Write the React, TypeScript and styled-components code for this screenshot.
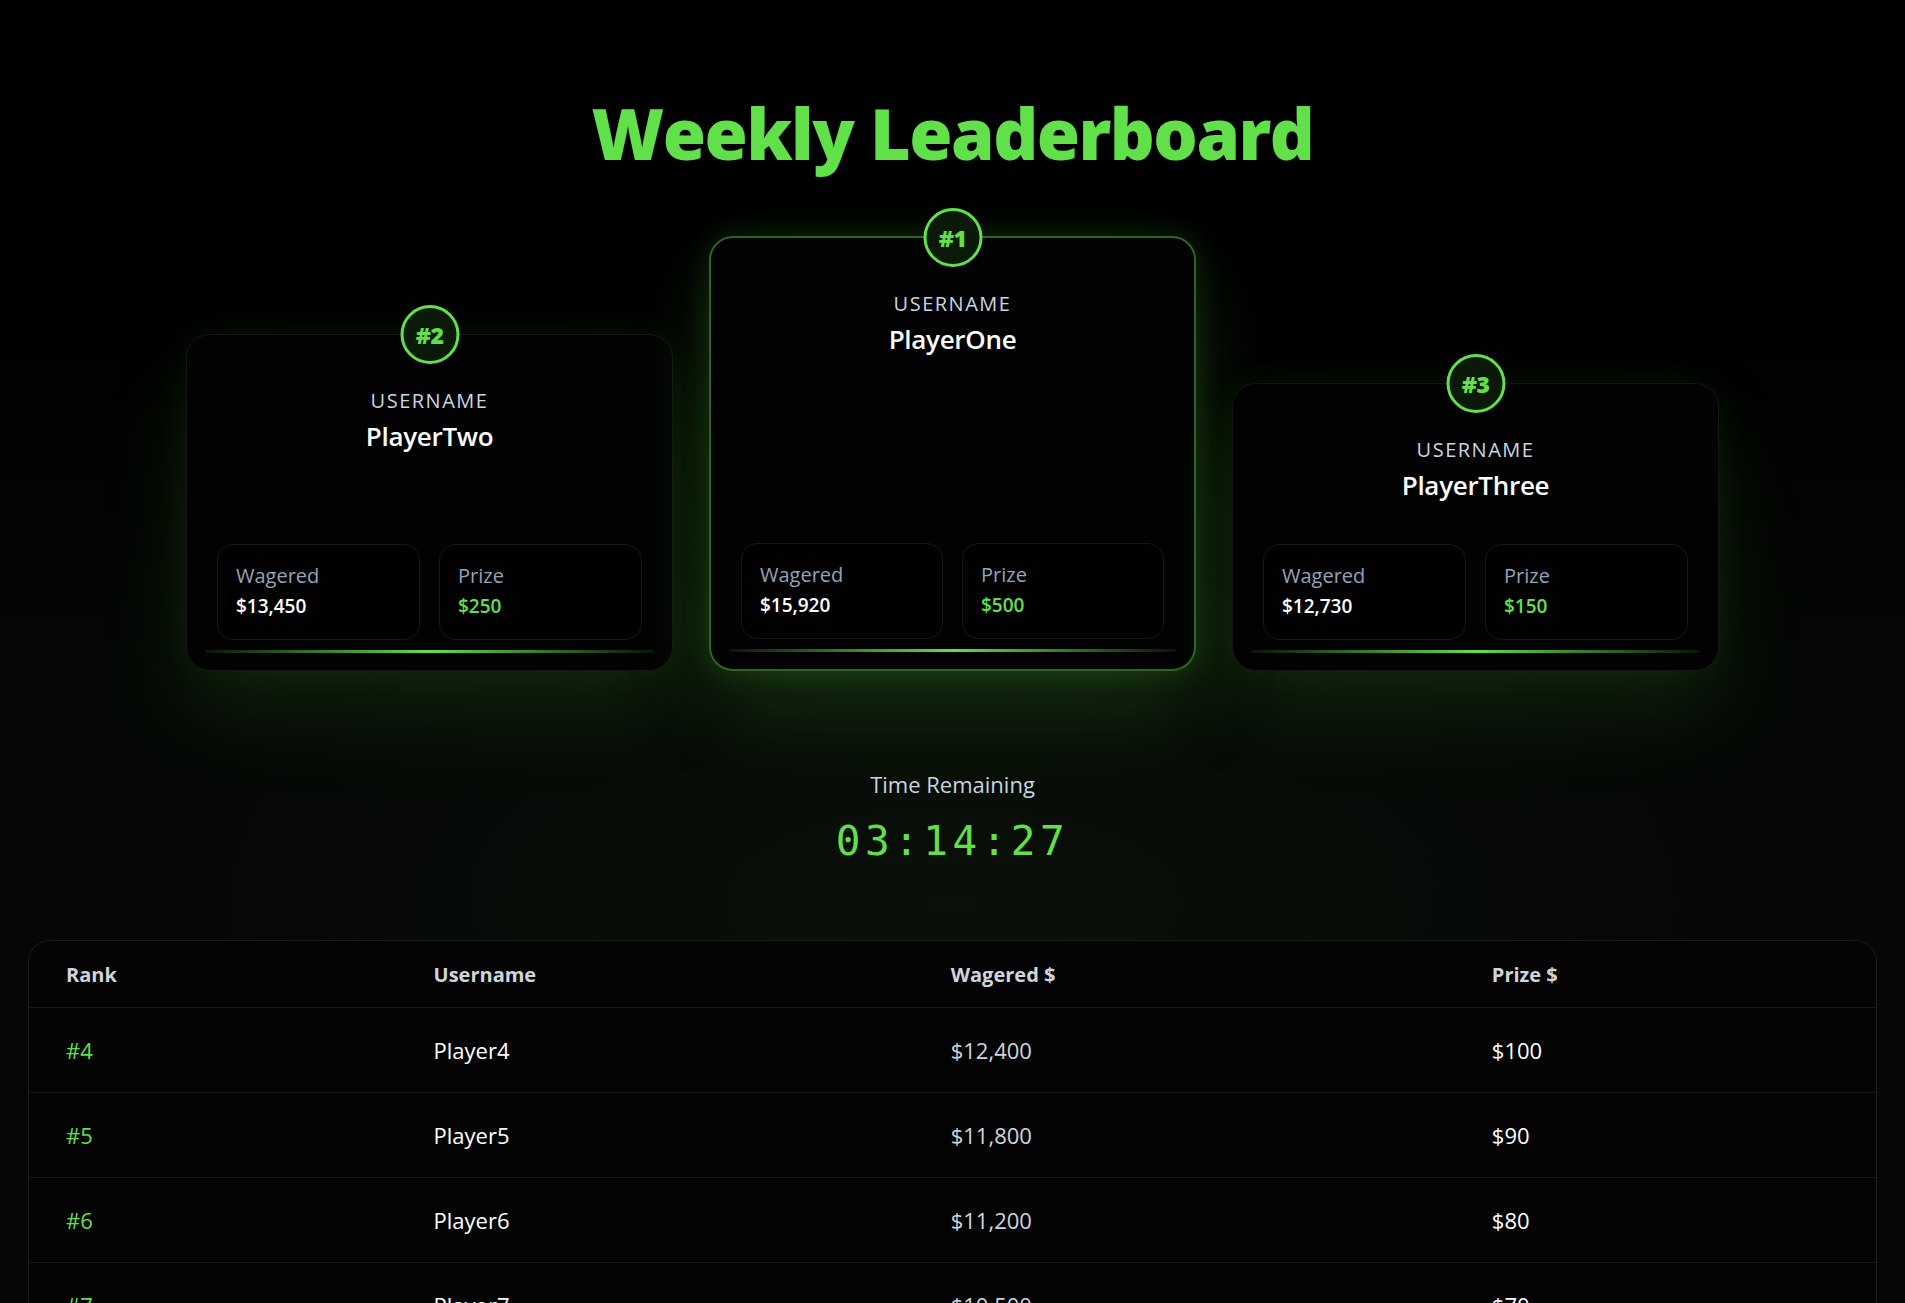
import styled, {createGlobalStyle} from 'styled-components';

type Podium = {
  rank: number;
  name: string;
  wagered: string;
  prize: string;
  height: number;
}

type Row = {
  rank: number;
  name: string;
  wagered: string;
  prize: string;
}

const GREEN = '#62e04a';

const podium: Podium[] = [
  {rank: 2, name: 'PlayerTwo', wagered: '$13,450', prize: '$250', height: 337},
  {rank: 1, name: 'PlayerOne', wagered: '$15,920', prize: '$500', height: 435},
  {rank: 3, name: 'PlayerThree', wagered: '$12,730', prize: '$150', height: 288},
];

const rows: Row[] = [
  {rank: 4, name: 'Player4', wagered: '$12,400', prize: '$100'},
  {rank: 5, name: 'Player5', wagered: '$11,800', prize: '$90'},
  {rank: 6, name: 'Player6', wagered: '$11,200', prize: '$80'},
  {rank: 7, name: 'Player7', wagered: '$10,500', prize: '$70'},
  {rank: 8, name: 'Player8', wagered: '$9,800', prize: '$60'},
  {rank: 9, name: 'Player9', wagered: '$9,100', prize: '$50'},
  {rank: 10, name: 'Player10', wagered: '$8,400', prize: '$40'},
];

export default function App() {
  return (
    <>
      <GlobalStyle/>
      <Page>
        <Title>Weekly Leaderboard</Title>

        <PodiumRow>
          {podium.map(p => (
            <Card key={p.rank} $first={p.rank === 1} $height={p.height}>
              <Badge>#{p.rank}</Badge>
              <Label>USERNAME</Label>
              <Name>{p.name}</Name>
              <Spacer/>
              <Stats>
                <StatBox>
                  <StatLabel>Wagered</StatLabel>
                  <StatValue>{p.wagered}</StatValue>
                </StatBox>
                <StatBox>
                  <StatLabel>Prize</StatLabel>
                  <StatValue $green>{p.prize}</StatValue>
                </StatBox>
              </Stats>
              <GlowLine/>
            </Card>
          ))}
        </PodiumRow>

        <Timer>
          <TimerLabel>Time Remaining</TimerLabel>
          <Clock>03:14:27</Clock>
        </Timer>

        <TableWrap>
          <Table>
            <colgroup>
              <col style={{width: '19.9%'}}/>
              <col style={{width: '28%'}}/>
              <col style={{width: '29.3%'}}/>
              <col/>
            </colgroup>
            <thead>
              <tr>
                <Th>Rank</Th>
                <Th>Username</Th>
                <Th>Wagered $</Th>
                <Th>Prize $</Th>
              </tr>
            </thead>
            <tbody>
              {rows.map(r => (
                <tr key={r.rank}>
                  <Td $tone={'green'}>#{r.rank}</Td>
                  <Td>{r.name}</Td>
                  <Td $tone={'muted'}>{r.wagered}</Td>
                  <Td>{r.prize}</Td>
                </tr>
              ))}
            </tbody>
          </Table>
        </TableWrap>
      </Page>
    </>
  )
}

const GlobalStyle = createGlobalStyle `
  html, body {
    margin: 0;
    padding: 0;
  }

  body {
    background: #040604;
    font-family: "Open Sans", "Noto Sans", sans-serif;
    color: #fff;
  }
`;

const Page = styled.div `
  min-height: 100vh;
  padding: 91px 29px 40px;
  box-sizing: border-box;
  display: flex;
  flex-direction: column;
  align-items: center;
  background:
    radial-gradient(ellipse 60% 30% at 50% 55%, rgba(40, 80, 30, 0.12), transparent 70%),
    linear-gradient(180deg, #000 0px, #000 300px, #050805 700px, #050705 100%);
`;

const Title = styled.h1 `
  margin: 0;
  font-family: "Open Sans", sans-serif;
  font-weight: 800;
  font-size: 70px;
  line-height: 1.2;
  letter-spacing: -1.5px;
  color: ${GREEN};
`;

const PodiumRow = styled.div `
  display: flex;
  align-items: flex-end;
  justify-content: center;
  gap: 36px;
  margin-top: 61px;
`;

const Card = styled.div<{$first?: boolean; $height: number}> `
  position: relative;
  width: 487px;
  height: ${({$height}) => $height}px;
  box-sizing: border-box;
  padding: 52px 30px 17px;
  display: flex;
  flex-direction: column;
  align-items: center;
  background: #020202;
  border-radius: 24px;
  border: ${({$first}) => $first ? '2px solid #2c6520' : '1px solid #141614'};
  box-shadow: ${({$first}) => $first
    ? '0 0 30px rgba(98, 224, 74, 0.16), 0 40px 90px rgba(98, 224, 74, 0.16)'
    : '0 0 40px rgba(98, 224, 74, 0.06), 0 40px 90px rgba(98, 224, 74, 0.12)'};
`;

const Badge = styled.div `
  position: absolute;
  top: -30px;
  left: 50%;
  transform: translateX(-50%);
  width: 59px;
  height: 59px;
  box-sizing: border-box;
  border-radius: 50%;
  border: 3px solid ${GREEN};
  background: #0b1a08;
  display: flex;
  align-items: center;
  justify-content: center;
  color: ${GREEN};
  font-weight: 800;
  font-size: 23px;
  letter-spacing: -0.5px;
`;

const Label = styled.div `
  font-size: 20px;
  letter-spacing: 1.5px;
  color: #cbd5e1;
  line-height: 28px;
`;

const Name = styled.div `
  margin-top: 3px;
  font-size: 26px;
  font-weight: 600;
  color: #fff;
  line-height: 36px;
  letter-spacing: -0.3px;
`;

const Spacer = styled.div `
  flex: 1;
`;

const Stats = styled.div `
  width: 100%;
  display: grid;
  grid-template-columns: 1fr 1fr;
  gap: 19px;
`;

const StatBox = styled.div `
  height: 96px;
  box-sizing: border-box;
  padding: 17px 18px;
  border: 1px solid #161616;
  border-radius: 16px;
  background: #010101;
  display: flex;
  flex-direction: column;
`;

const StatLabel = styled.span `
  font-size: 20px;
  line-height: 28px;
  color: #94a3b8;
`;

const StatValue = styled.span<{$green?: boolean}> `
  margin-top: 2px;
  font-size: 19px;
  line-height: 28px;
  font-weight: 600;
  color: ${({$green}) => $green ? GREEN : '#fff'};
`;

const GlowLine = styled.div `
  align-self: stretch;
  margin: 10px -12px 0;
  height: 3px;
  border-radius: 2px;
  background: linear-gradient(90deg, rgba(98, 224, 74, 0.08), ${GREEN} 50%, rgba(98, 224, 74, 0.08));
`;

const Timer = styled.div `
  margin-top: 98px;
  display: flex;
  flex-direction: column;
  align-items: center;
`;

const TimerLabel = styled.div `
  font-size: 22px;
  line-height: 30px;
  color: #cbd5e1;
`;

const Clock = styled.div `
  margin-top: 16px;
  font-family: "DejaVu Sans Mono", "Liberation Mono", monospace;
  font-size: 41px;
  line-height: 52px;
  letter-spacing: 4.5px;
  color: ${GREEN};
`;

const TableWrap = styled.div `
  margin-top: 73px;
  width: 100%;
  border: 1px solid #1b1d1b;
  border-radius: 22px;
  background: #040404;
  overflow: hidden;
`;

const Table = styled.table `
  width: 100%;
  border-collapse: collapse;
  table-layout: fixed;
`;

const Th = styled.th `
  text-align: left;
  height: 66px;
  padding: 0 37px;
  font-size: 20px;
  font-weight: 700;
  color: #d1d5db;
  border-bottom: 1px solid #161816;
`;

const Td = styled.td<{$tone?: 'green' | 'muted'}> `
  height: 84px;
  padding: 0 37px;
  font-size: 22px;
  color: ${({$tone}) => $tone === 'green' ? GREEN : $tone === 'muted' ? '#d1d5db' : '#fff'};
  border-bottom: 1px solid #141614;
`;
